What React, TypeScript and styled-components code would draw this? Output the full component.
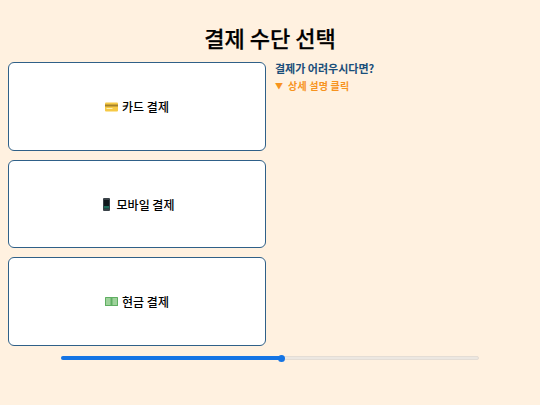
import React from "react";
import styled, { createGlobalStyle } from "styled-components";

const Global = createGlobalStyle`
  html, body { margin: 0; padding: 0; background: #fff1e0; }
  body { font-family: "Inter", "Noto Sans CJK KR", sans-serif; }
`;

const Page = styled.div`
  width: 540px;
  height: 405px;
  box-sizing: border-box;
  padding: 22px 8px 0;
  background: #fff1e0;
  overflow: hidden;
`;

const Title = styled.h1`
  margin: 0 0 9.4px;
  height: 31px;
  line-height: 31px;
  text-align: center;
  font-size: 22px;
  font-weight: 500;
  -webkit-text-stroke: 0.25px #000;
  color: #000;
  font-family: "Noto Sans CJK KR", sans-serif;
`;

const Columns = styled.div`
  display: flex;
  gap: 9px;
`;

const Options = styled.div`
  width: 258px;
  display: flex;
  flex-direction: column;
  gap: 9px;
`;

const Option = styled.button`
  height: 88.5px;
  box-sizing: border-box;
  display: flex;
  align-items: center;
  justify-content: center;
  gap: 4px;
  background: #fff;
  border: 1px solid #2f6088;
  border-radius: 6px;
  padding: 0;
  font-family: "Noto Sans CJK KR", sans-serif;
  font-size: 12px;
  font-weight: 500;
  color: #000;
`;

const IconSlot = styled.span`
  width: 13px;
  display: flex;
  align-items: center;
  justify-content: center;
`;

const Help = styled.div`
  display: flex;
  flex-direction: column;
  gap: 3px;
  margin-top: -1px;
  font-family: "Noto Sans CJK KR", sans-serif;
`;

const HelpTitle = styled.div`
  font-size: 11px;
  line-height: 14px;
  font-weight: 700;
  color: #1a4e7a;
`;

const HelpToggle = styled.div`
  display: flex;
  align-items: center;
  gap: 5px;
  font-size: 10px;
  line-height: 15px;
  font-weight: 700;
  letter-spacing: 0.2px;
  color: #f7931e;
`;

const Arrow = styled.span`
  font-size: 8px;
  width: 8px;
`;

const Track = styled.div`
  position: relative;
  width: 418px;
  height: 4px;
  margin: 10.4px 0 0 53px;
  background: #ece7e1;
  border: 1px solid #e4ddd5;
  box-sizing: border-box;
  border-radius: 2px;
`;

const Fill = styled.div`
  position: absolute;
  left: -1px;
  top: -1px;
  height: 4px;
  background: #1574e4;
  border-radius: 2px;
`;

const Thumb = styled.div`
  position: absolute;
  top: -2.5px;
  width: 7px;
  height: 7px;
  margin-left: -3.5px;
  border-radius: 50%;
  background: #1574e4;
`;

const CardIcon = () => (
  <svg width="13" height="10" viewBox="0 0 13 10">
    <rect x="0" y="0.5" width="13" height="9" rx="1" fill="#f6c945" />
    <rect x="0" y="2.5" width="13" height="2" fill="#a5822a" />
    <rect x="1.5" y="6" width="6" height="1" fill="#fff0b0" />
  </svg>
);

const PhoneIcon = () => (
  <svg width="7" height="13" viewBox="0 0 7 13">
    <rect x="0" y="0" width="7" height="13" rx="1" fill="#3a4248" />
    <rect x="1" y="2" width="5" height="8.5" fill="#10181c" />
    <rect x="1" y="8" width="5" height="2.5" fill="#1d6b5a" />
  </svg>
);

const CashIcon = () => (
  <svg width="13" height="9" viewBox="0 0 13 9">
    <rect x="0" y="0" width="13" height="9" rx="0.5" fill="#5fae62" />
    <rect x="1" y="1" width="4.5" height="7" fill="#9ed29b" />
    <rect x="7.5" y="1" width="4.5" height="7" fill="#9ed29b" />
  </svg>
);

const options = [
  { label: "카드 결제", icon: <CardIcon /> },
  { label: "모바일 결제", icon: <PhoneIcon /> },
  { label: "현금 결제", icon: <CashIcon /> },
];

export default function App() {
  const progress = 52.8;
  return (
    <Page>
      <Global />
      <Title>결제 수단 선택</Title>
      <Columns>
        <Options>
          {options.map((o) => (
            <Option key={o.label}>
              <IconSlot>{o.icon}</IconSlot>
              <span>{o.label}</span>
            </Option>
          ))}
        </Options>
        <Help>
          <HelpTitle>결제가 어려우시다면?</HelpTitle>
          <HelpToggle>
            <Arrow>▼</Arrow>
            <span>상세 설명 클릭</span>
          </HelpToggle>
        </Help>
      </Columns>
      <Track>
        <Fill style={{ width: `${progress}%` }} />
        <Thumb style={{ left: `${progress}%` }} />
      </Track>
    </Page>
  );
}
